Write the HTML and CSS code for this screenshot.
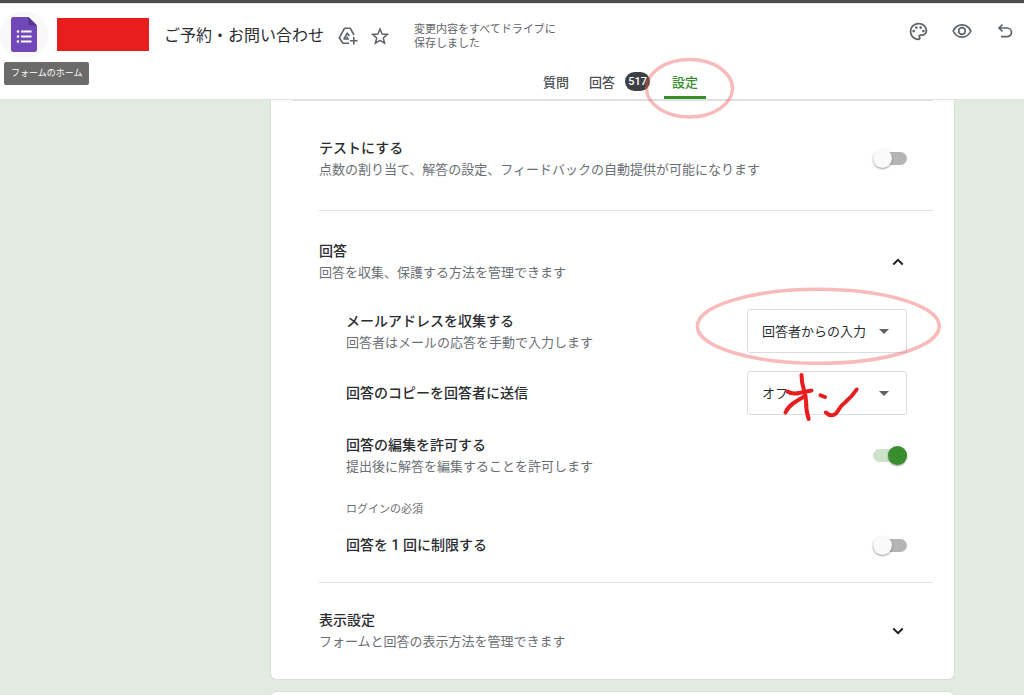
FILE: index.html
```html
<!DOCTYPE html>
<html lang="ja">
<head>
<meta charset="utf-8">
<title>ご予約・お問い合わせ</title>
<meta name="viewport" content="width=device-width, initial-scale=1">
<link rel="stylesheet" href="styles.css">
</head>
<body>
<header class="header">
  <div class="toolbar">
    <a class="home" href="#" aria-label="フォームのホーム">
      <svg width="26" height="35" viewBox="0 0 26 35" aria-hidden="true">
        <path fill="#7248b9" d="M2.500 0H17.500L26 8.500V32.500Q26 35 23.500 35H2.500Q0 35 0 32.500V2.500Q0 0 2.500 0Z"/>
        <path fill="#56358f" d="M17.500 0L26 8.500H19.500Q17.500 8.500 17.500 6.500Z"/>
        <g fill="#fff"><circle cx="7" cy="14.500" r="1.300"/><circle cx="7" cy="19.500" r="1.300"/><circle cx="7" cy="24.500" r="1.300"/><path d="M10 13.400h10.500v2.200H10zM10 18.400h10.500v2.200H10zM10 23.400h10.500v2.200H10z"/></g>
      </svg>
      <span class="tooltip">フォームのホーム</span>
    </a>
    <span class="redaction"></span>
    <h1 class="doc-title">ご予約・お問い合わせ</h1>
    <button class="icon-button" type="button" aria-label="フォルダに移動">
      <svg width="20" height="18" viewBox="0 0 20 18" fill="none" stroke="#5f6368" stroke-width="1.600" stroke-linejoin="round" aria-hidden="true">
        <path d="M11 16.200H5L1.200 10.800 6.600 1.200H12.200L16 8"/><path d="M11 12H6L9.200 6.200 11.500 9M9.200 9.500V12"/><path d="M15.800 10v7.500M12 13.800h7.600"/>
      </svg>
    </button>
    <button class="icon-button" type="button" aria-label="スターを付ける">
      <svg width="18" height="18" viewBox="0 0 18 18" fill="none" stroke="#5f6368" stroke-width="1.500" aria-hidden="true">
        <path d="M9 2L11.100 7 16.400 7.400 12.300 10.900 13.600 16.100 9 13.300 4.400 16.100 5.700 10.900 1.600 7.400 6.900 7Z"/>
      </svg>
    </button>
    <p class="save-state">変更内容をすべてドライブに保存しました</p>
    <div class="actions">
      <button class="icon-button" type="button" aria-label="テーマをカスタマイズ">
        <svg width="21" height="21" viewBox="0 0 24 24" fill="#5f6368" aria-hidden="true">
          <path d="M12 22C6.490 22 2 17.510 2 12S6.490 2 12 2s10 4.040 10 9c0 3.310-2.690 6-6 6h-1.770c-.28 0-.5.220-.5.500 0 .12.050.23.130.33.410.47.640 1.060.640 1.670A2.500 2.500 0 0 1 12 22zm0-18c-4.410 0-8 3.590-8 8s3.590 8 8 8c.28 0 .5-.22.500-.5a.54.54 0 0 0-.14-.35c-.41-.46-.63-1.050-.63-1.650a2.500 2.500 0 0 1 2.500-2.500H16c2.210 0 4-1.790 4-4 0-3.860-3.590-7-8-7z"/><circle cx="6.500" cy="11.500" r="1.500"/><circle cx="9.500" cy="7.500" r="1.500"/><circle cx="14.500" cy="7.500" r="1.500"/><circle cx="17.500" cy="11.500" r="1.500"/>
        </svg>
      </button>
      <button class="icon-button" type="button" aria-label="プレビュー">
        <svg width="20" height="20" viewBox="0 0 20 20" fill="none" stroke="#5f6368" stroke-width="1.700" aria-hidden="true">
          <path d="M1.200 10C3 6 6.200 3.900 10 3.900S17 6 18.800 10C17 14 13.800 16.100 10 16.100S3 14 1.200 10Z"/><circle cx="10" cy="10" r="3.300"/>
        </svg>
      </button>
      <button class="icon-button" type="button" aria-label="元に戻す">
        <svg width="16" height="16" viewBox="0 0 16 16" fill="none" stroke="#5f6368" stroke-width="1.700" aria-hidden="true">
          <path d="M5.500 1.500L2 5 5.500 8.500M2 5H10.200A4.300 4.300 0 0 1 10.200 13.600H4"/>
        </svg>
      </button>
    </div>
  </div>
  <nav class="tabs">
    <a class="tab" href="#">質問</a>
    <a class="tab" href="#">回答<span class="badge">517</span></a>
    <a class="tab tab-active" href="#" aria-current="page">設定</a>
  </nav>
</header>

<main class="page">
  <div class="card">
    <hr class="rule rule-wide">
    <section class="section section-quiz">
      <div class="row">
        <label class="text" for="quiz"><span class="title">テストにする</span><span class="desc">点数の割り当て、解答の設定、フィードバックの自動提供が可能になります</span></label>
        <input class="switch" type="checkbox" id="quiz">
      </div>
    </section>
    <hr class="rule">
    <section class="section section-responses">
      <div class="row">
        <div class="text"><h2 class="title">回答</h2><p class="desc">回答を収集、保護する方法を管理できます</p></div>
        <button class="expander" type="button" aria-label="回答を折りたたむ" aria-expanded="true">
          <svg width="12" height="8" viewBox="0 0 12 8" fill="none" stroke="#202124" stroke-width="2" aria-hidden="true"><path d="M1.300 6.500L6 1.800 10.700 6.500"/></svg>
        </button>
      </div>
      <div class="group">
        <div class="row option">
          <label class="text" for="email"><span class="title">メールアドレスを収集する</span><span class="desc">回答者はメールの応答を手動で入力します</span></label>
          <span class="select-box"><select class="select" id="email"><option>回答者からの入力</option></select></span>
        </div>
        <div class="row option">
          <label class="text" for="copy"><span class="title">回答のコピーを回答者に送信</span></label>
          <span class="select-box"><select class="select" id="copy"><option>オフ</option></select></span>
        </div>
        <div class="row option">
          <label class="text" for="edit"><span class="title">回答の編集を許可する</span><span class="desc">提出後に解答を編集することを許可します</span></label>
          <input class="switch" type="checkbox" id="edit" checked>
        </div>
        <div class="login">
          <h3 class="subhead">ログインの必須</h3>
          <div class="row option">
            <label class="text" for="once"><span class="title">回答を 1 回に制限する</span></label>
            <input class="switch" type="checkbox" id="once">
          </div>
        </div>
      </div>
    </section>
    <hr class="rule">
    <section class="section section-display">
      <div class="row">
        <div class="text"><h2 class="title">表示設定</h2><p class="desc">フォームと回答の表示方法を管理できます</p></div>
        <button class="expander" type="button" aria-label="表示設定を開く" aria-expanded="false">
          <svg width="12" height="8" viewBox="0 0 12 8" fill="none" stroke="#202124" stroke-width="2" aria-hidden="true"><path d="M1.300 1.500L6 6.200 10.700 1.500"/></svg>
        </button>
      </div>
    </section>
  </div>
  <div class="card card-next"></div>
</main>

<svg class="marks" width="1024" height="695" viewBox="0 0 1024 695" fill="none" stroke-linecap="round" stroke-linejoin="round" aria-hidden="true">
  <g stroke="#ee5a5a" stroke-opacity="0.420" stroke-width="3.500">
    <ellipse cx="689.500" cy="88.300" rx="43" ry="28.700"/>
    <ellipse cx="818.300" cy="326.300" rx="121" ry="37"/>
  </g>
  <g stroke="#e81e1e" stroke-width="4">
    <path d="M787.500 391.500Q792 394.500 799 393L811.500 390.500"/>
    <path d="M801.500 375C801.500 389 806 391 806 401Q806 411 808.700 419"/>
    <path d="M805 396Q798 400 793 403.500T785.500 412.500"/>
    <path d="M820.500 395.300L825 397"/>
    <path d="M825.800 412.500Q831 417.500 836 413.500C840 409 839 407 845 402.500Q852 396.500 856.700 389.500"/>
  </g>
</svg>
</body>
</html>
```

FILE: styles.css
```css
* { box-sizing: border-box; }

body {
  margin: 0;
  height: 100vh;
  display: flex;
  flex-direction: column;
  position: relative;
  overflow: hidden;
  background: #e1ebdf;
  color: #2b2d31;
  font-family: Roboto, "Noto Sans CJK JP", sans-serif;
  font-size: 13px;
}

h1, h2, h3, p { margin: 0; font-weight: 400; }
a { color: inherit; text-decoration: none; }
button { padding: 0; border: 0; background: none; }
svg { display: block; }

.header {
  flex: none;
  background: #fff;
  border-top: 3px solid #4d4d4d;
  border-bottom: 1px solid #dfe1e5;
}

.toolbar {
  display: flex;
  align-items: center;
  height: 62px;
  padding-right: 11px;
  border-top: 1px solid #e4e4e4;
}

.home {
  position: relative;
  display: grid;
  place-items: center;
  width: 48px;
  height: 48px;
  border-radius: 50%;
  background: #f8f8f8;
}

.tooltip {
  position: absolute;
  top: 51px;
  left: 4px;
  padding: 0 7px;
  border-radius: 2px;
  background: #6b6b6b;
  color: #fff;
  font-size: 9px;
  line-height: 23px;
  white-space: nowrap;
}

.redaction {
  width: 92px;
  height: 33px;
  margin: 0 15px 0 9px;
  background: #e81e1e;
}

.doc-title { margin-right: 14px; padding-top: 2px; font-size: 16px; line-height: 24px; white-space: nowrap; }
.icon-button + .icon-button { margin-left: 13px; }
.doc-title ~ .icon-button { padding-top: 3px; }

.save-state {
  width: 150px;
  margin-left: 25px;
  padding-top: 4px;
  color: #5f6368;
  font-size: 11px;
  line-height: 14px;
}

.actions {
  display: flex;
  align-items: center;
  gap: 10px;
  margin-left: auto;
  padding-bottom: 7px;
}

.actions .icon-button:last-child { margin-left: 15px; }

.tabs {
  display: flex;
  justify-content: center;
  height: 34px;
  padding-left: 217px;
  gap: 12px;
}

.tab {
  display: flex;
  align-items: center;
  gap: 10px;
  padding: 2px 0 0 8px;
  border-bottom: 3px solid transparent;
  color: #4d5156;
  font-size: 13px;
  font-weight: 500;
}

.tab-active { margin-left: 2px; padding: 2px 8px 0; border-color: #388e2c; color: #388e2c; }

.badge {
  padding: 0 3px;
  border-radius: 10px;
  background: #3c4043;
  color: #fff;
  font-size: 11px;
  line-height: 19px;
}

.page {
  flex: 1;
  min-height: 0;
  padding: 0 69px 0 270px;
}

.card {
  padding: 0 21px 27px 48px;
  border: 1px solid #d8dfd7;
  border-top: 0;
  border-radius: 0 0 7px 7px;
  background: #fff;
}

.card-next { margin-top: 11px; border-top: 1px solid #d8dfd7; border-radius: 7px; }

.rule { height: 1px; margin: 0; border: 0; background: #e2e2e2; }
.rule-wide { margin-left: -27px; }

.section-quiz { padding: 36px 0 30px; }
.section-responses { padding: 29px 0 15px; }
.section-display { padding-top: 26px; }

.row {
  display: flex;
  align-items: center;
  justify-content: space-between;
  padding-right: 26px;
}

.group { display: flex; flex-direction: column; gap: 18px; padding: 26px 0 0 27px; }
.option { height: 44px; }

.text { display: flex; flex-direction: column; }
.title { font-size: 14px; font-weight: 500; line-height: 22px; }
.desc { color: #6a6e73; font-size: 13px; line-height: 21px; }
.subhead { margin: 2px 0 0; color: #6a6e73; font-size: 11px; line-height: 26px; }

.select-box { position: relative; }

.select-box::after {
  content: "";
  position: absolute;
  top: 20px;
  right: 18px;
  border: 5px solid transparent;
  border-top-color: #5f6368;
  border-bottom: 0;
  pointer-events: none;
}

.select {
  display: block;
  width: 160px;
  height: 44px;
  padding: 0 36px 0 14px;
  border: 1px solid #dadce0;
  border-radius: 3px;
  appearance: none;
  background: #fff;
  color: #2b2d31;
  font: inherit;
}

.switch {
  display: flex;
  align-items: center;
  width: 34px;
  height: 13px;
  margin: 0;
  border-radius: 7px;
  appearance: none;
  background: #b5b5b5;
}

.switch::before {
  content: "";
  flex: none;
  width: 19px;
  height: 19px;
  border-radius: 50%;
  background: #fafafa;
  box-shadow: 0 1px 2px rgba(0, 0, 0, 0.4);
}

.switch:checked { justify-content: flex-end; background: #cde3ca; }
.switch:checked::before { background: #388e2c; }

.expander { display: grid; place-items: center; width: 18px; height: 18px; }

.marks { position: absolute; top: 0; left: 0; pointer-events: none; }
```
